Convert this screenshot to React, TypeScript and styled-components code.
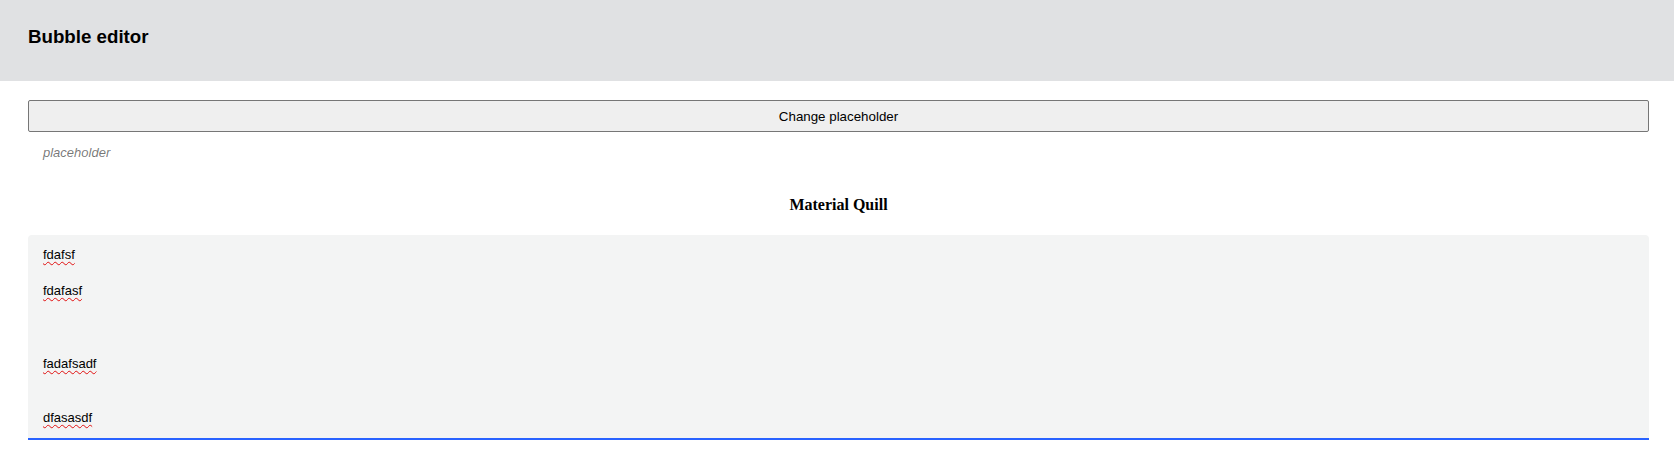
import React from "react";
import styled, { createGlobalStyle } from "styled-components";

const GlobalStyle = createGlobalStyle`
  html, body {
    margin: 0;
    padding: 0;
    background: #ffffff;
  }
  body {
    font-family: "Liberation Sans", Arial, sans-serif;
    color: #000;
  }
`;

const Header = styled.header`
  height: 81px;
  box-sizing: border-box;
  padding: 26px 0 0 28px;
  background: #e0e1e3;
`;

const Title = styled.h3`
  margin: 0;
  font-family: "Liberation Sans", Arial, sans-serif;
  font-size: 18.72px;
  font-weight: bold;
  line-height: normal;
`;

const Main = styled.main`
  display: flex;
  flex-direction: column;
  padding: 19px 25px 0 28px;
`;

const ActionButton = styled.button`
  height: 32px;
  width: 100%;
  box-sizing: border-box;
  border: 1px solid #767676;
  border-radius: 2px;
  background: #efefef;
  font-family: "Liberation Sans", Arial, sans-serif;
  font-size: 13.33px;
  color: #000;
  padding: 1px 6px;
`;

const BubbleEditor = styled.div`
  padding: 12px 15px;
  font-family: "Liberation Sans", Arial, sans-serif;
  font-size: 13px;
  line-height: 1.42;
`;

const Placeholder = styled.p`
  margin: 0;
  font-style: italic;
  color: rgba(0, 0, 0, 0.55);
`;

const SectionTitle = styled.h4`
  margin: 21.28px 0;
  text-align: center;
  font-family: "Liberation Serif", "Times New Roman", serif;
  font-size: 16px;
  font-weight: bold;
  line-height: normal;
`;

const FilledEditor = styled.div`
  display: flex;
  flex-direction: column;
  align-items: flex-start;
  background: #f3f4f4;
  border-radius: 4px 4px 0 0;
  border-bottom: 2px solid #2962ff;
  padding: 11px 15px 10px;
  font-family: "Liberation Sans", Arial, sans-serif;
  font-size: 13px;
  line-height: 1.42;
  color: #000;
`;

const Line = styled.p<{ $gap: number }>`
  margin: ${(p) => p.$gap}px 0 0;
`;

const Misspelled = styled.span`
  text-decoration: underline wavy #e01010;
  text-decoration-thickness: 1px;
  text-underline-offset: 2px;
  text-decoration-skip-ink: none;
`;

const lines = [
  { text: "fdafsf", gap: 0 },
  { text: "fdafasf", gap: 18 },
  { text: "fadafsadf", gap: 54 },
  { text: "dfasasdf", gap: 36 },
];

export default function App() {
  return (
    <>
      <GlobalStyle />
      <Header>
        <Title>Bubble editor</Title>
      </Header>
      <Main>
        <ActionButton>Change placeholder</ActionButton>
        <BubbleEditor>
          <Placeholder>placeholder</Placeholder>
        </BubbleEditor>
        <SectionTitle>Material Quill</SectionTitle>
        <FilledEditor>
          {lines.map((l) => (
            <Line key={l.text} $gap={l.gap}>
              <Misspelled>{l.text}</Misspelled>
            </Line>
          ))}
        </FilledEditor>
      </Main>
    </>
  );
}
